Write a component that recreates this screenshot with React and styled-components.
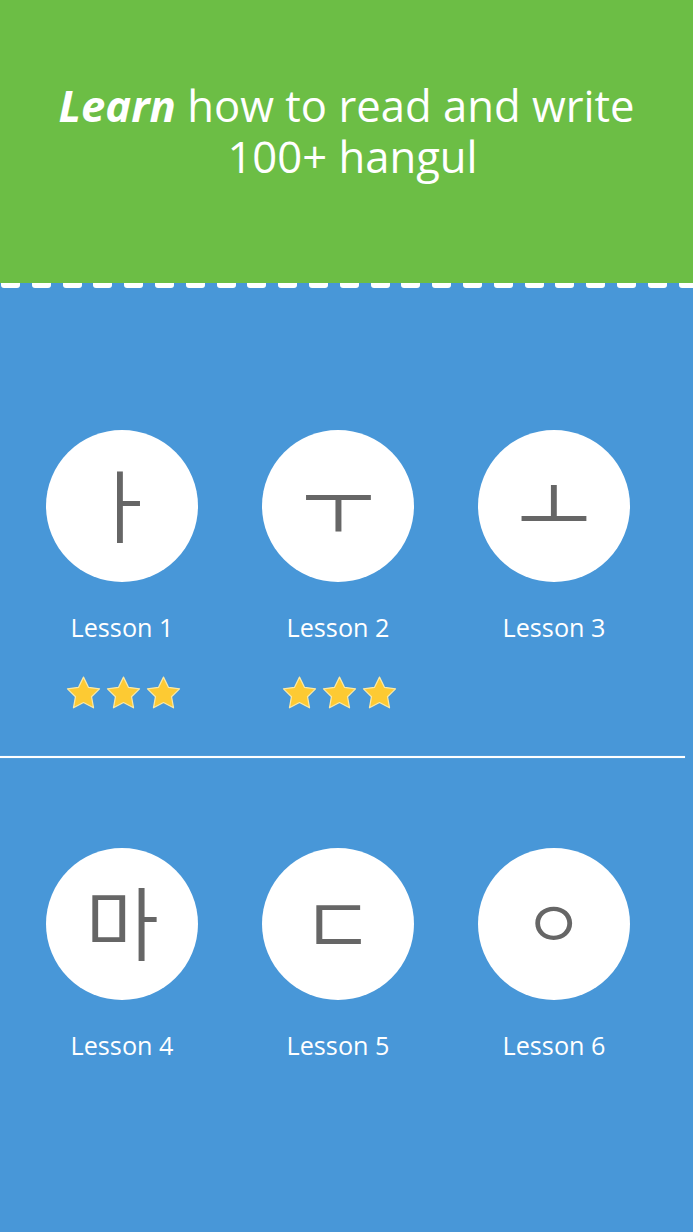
import React from "react";
import styled, { createGlobalStyle } from "styled-components";

const Global = createGlobalStyle`
  html, body { margin: 0; padding: 0; }
  body { background: #4897d8; font-family: "Open Sans", "Noto Sans", sans-serif; }
`;

const Page = styled.div`
  width: 693px;
  min-height: 1232px;
  display: flex;
  flex-direction: column;
  background: #4897d8;
`;

const Header = styled.header`
  height: 283px;
  background: #6cbe45;
  display: flex;
  align-items: center;
  justify-content: center;
  padding-bottom: 22px;
  box-sizing: border-box;
`;

const Title = styled.h1`
  margin: 0;
  color: #fff;
  font-family: "Open Sans", sans-serif;
  font-weight: 400;
  font-size: 43.6px;
  line-height: 51px;
  text-align: center;
  em { font-weight: 700; font-style: italic; }
`;

const TitleLine = styled.span`
  display: block;
  padding-left: ${(p) => p.$shift || 0}px;
`;

const Dashes = styled.div`
  display: flex;
  gap: 11.8px;
  padding-left: 1px;
  height: 5px;
  overflow: hidden;
`;

const Dash = styled.span`
  flex: 0 0 19px;
  height: 5px;
  background: #fff;
  border-radius: 0 0 3px 3px;
`;

const Row = styled.section`
  display: grid;
  grid-template-columns: repeat(3, 216px);
  padding-left: 14px;
  padding-top: ${(p) => p.$top}px;
  padding-bottom: ${(p) => p.$bottom}px;
`;

const Cell = styled.div`
  display: flex;
  flex-direction: column;
  align-items: center;
`;

const Circle = styled.div`
  width: 152px;
  height: 152px;
  border-radius: 50%;
  background: #fff;
  display: flex;
  align-items: center;
  justify-content: center;
  color: #666;
  font-family: "Noto Sans CJK KR", sans-serif;
  font-weight: 350;
  font-size: 80px;
  line-height: 1;
`;

const Glyph = styled.span`
  display: block;
  transform: translateY(-5px) scale(${(p) => p.$scale || 1});
`;

const Label = styled.div`
  margin-top: 29px;
  color: #fff;
  font-size: 25.2px;
  line-height: 32px;
`;

const Stars = styled.div`
  margin-top: 32px;
  height: 36px;
  display: flex;
  gap: 3px;
  padding-left: 3px;
`;

const Divider = styled.hr`
  margin: 0;
  border: 0;
  width: 685px;
  height: 2px;
  background: #fff;
  box-shadow: 0 0 1px rgba(255,255,255,0.6);
`;

const Star = () => (
  <svg width="37" height="36" viewBox="0 0 24 23">
    <path
      d="M12 1.2l3.2 6.6 7.2 1-5.2 5.1 1.3 7.2L12 17.7l-6.5 3.4 1.3-7.2L1.6 8.8l7.2-1z"
      fill="#fdca33"
      stroke="#fbe9a6"
      strokeWidth="0.8"
      strokeLinejoin="round"
    />
  </svg>
);

const row1 = [
  { glyph: "ㅏ", label: "Lesson 1", stars: 3 },
  { glyph: "ㅜ", label: "Lesson 2", stars: 3 },
  { glyph: "ㅗ", label: "Lesson 3", stars: 0 },
];
const row2 = [
  { glyph: "마", label: "Lesson 4" },
  { glyph: "ㄷ", label: "Lesson 5" },
  { glyph: "ㅇ", label: "Lesson 6", scale: 0.82 },
];

const Lesson = ({ glyph, label, stars, showStars, scale }) => (
  <Cell>
    <Circle>
      <Glyph $scale={scale}>{glyph}</Glyph>
    </Circle>
    <Label>{label}</Label>
    {showStars && (
      <Stars>
        {Array.from({ length: stars || 0 }).map((_, i) => (
          <Star key={i} />
        ))}
      </Stars>
    )}
  </Cell>
);

export default function App() {
  return (
    <Page>
      <Global />
      <Header>
        <Title>
          <TitleLine>
            <em>Learn</em> how to read and write
          </TitleLine>
          <TitleLine $shift={12}>100+ hangul</TitleLine>
        </Title>
      </Header>
      <Dashes>
        {Array.from({ length: 23 }).map((_, i) => (
          <Dash key={i} />
        ))}
      </Dashes>
      <Row $top={142} $bottom={45}>
        {row1.map((l) => (
          <Lesson key={l.label} {...l} showStars />
        ))}
      </Row>
      <Divider />
      <Row $top={90} $bottom={0}>
        {row2.map((l) => (
          <Lesson key={l.label} {...l} />
        ))}
      </Row>
    </Page>
  );
}
